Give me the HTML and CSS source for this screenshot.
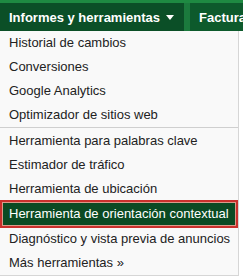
FILE: index.html
```html
<!doctype html>
<html lang="es">

<head>
  <meta charset="UTF-8" />
  <title>Informes y herramientas</title>
  <link rel="stylesheet" href="styles.css">
</head>

<body>
  <div class="topbar"></div>
  <div class="tabs">
    <div class="tab tab-open">Informes y herramientas <i class="caret"></i></div>
    <div class="tab">Facturación</div>
  </div>

  <ul class="menu">
    <li class="menu-item">Historial de cambios</li>
    <li class="menu-item">Conversiones</li>
    <li class="menu-item">Google Analytics</li>
    <li class="menu-item">Optimizador de sitios web</li>
    <li class="menu-sep"></li>
    <li class="menu-item">Herramienta para palabras clave</li>
    <li class="menu-item">Estimador de tráfico</li>
    <li class="menu-item">Herramienta de ubicación</li>
    <li class="menu-item active">Herramienta de orientación contextual</li>
    <li class="menu-item">Diagnóstico y vista previa de anuncios</li>
    <li class="menu-item">Más herramientas »</li>
  </ul>
</body>

</html>
```

FILE: styles.css
```css
body {
  margin: 0;
  background: #fff;
  font-family: "Liberation Sans", Arial, sans-serif;
  font-size: 13px;
  overflow: hidden;
}

.topbar {
  height: 3px;
  background: #1e8a42;
}

.tabs {
  display: flex;
  gap: 6px;
  height: 28px;
  background: #1b7a3d;
  white-space: nowrap;
  overflow: hidden;
}

.tab {
  display: flex;
  align-items: center;
  padding: 0 10px 0 9px;
  background: #0d5a2c;
  color: #fff;
  font-weight: bold;
}

.tab-open {
  width: 167px;
  background: #0b4f27;
}

.caret {
  display: inline-block;
  margin-left: 6px;
  width: 0;
  height: 0;
  border-style: solid;
  border-width: 5px 4px 0 4px;
  border-color: #fff transparent transparent transparent;
}

.menu {
  list-style: none;
  margin: 0;
  padding: 0;
  width: 238px;
  background: #f9f9f9;
  border-right: 1px solid #d6d6d6;
  border-bottom: 1px solid #d6d6d6;
  color: #222;
}

.menu-item {
  height: 24px;
  line-height: 24px;
  padding-left: 9px;
  white-space: nowrap;
}

.menu-sep {
  height: 1px;
  margin: 0 0 1px;
  background: #cfcfcf;
}

.menu-item.active {
  margin: -1px 0 -1px;
  height: 24px;
  padding-left: 7px;
  border: 2px solid #c9302c;
  background: #0b4a23;
  color: #fff;
  box-shadow: inset 0 0 0 1px #d99b8a;
}
```
